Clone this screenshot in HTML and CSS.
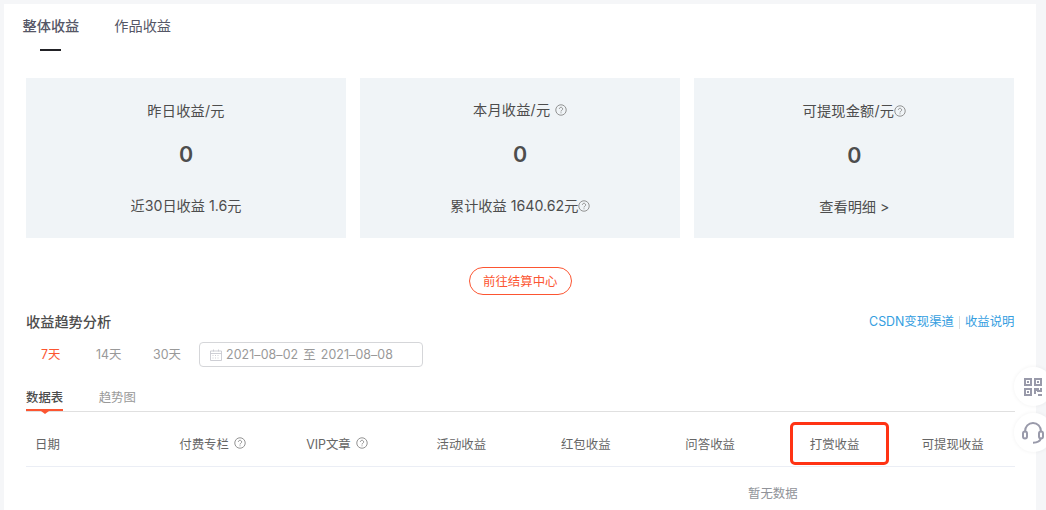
FILE: index.html
```
<!DOCTYPE html>
<html lang="zh-CN">

<head>
    <meta charset="UTF-8">
    <meta name="viewport" content="width=device-width, initial-scale=1.0">
    <title>收益</title>
    <link rel="stylesheet" href="styles.css">
</head>

<body>
    <svg class="symbols">
        <symbol id="help" viewBox="0 0 14 14">
            <circle cx="7" cy="7" r="6.1" />
            <path d="M5.1 5.7a1.9 1.9 0 1 1 2.9 1.6c-.7.4-1 .7-1 1.4M7 9.8v1" />
        </symbol>
    </svg>
    <main class="page">
        <nav class="tabs">
            <a class="tab active">整体收益</a>
            <a class="tab">作品收益</a>
        </nav>
        <section class="cards">
            <div class="card first">
                <p class="card-title">昨日收益/元</p>
                <p class="num">0</p>
                <p class="card-foot">近30日收益 1.6元</p>
            </div>
            <div class="card">
                <p class="card-title">本月收益/元<svg class="help space"><use href="#help" /></svg></p>
                <p class="num">0</p>
                <p class="card-foot">累计收益 1640.62元<svg class="help"><use href="#help" /></svg></p>
            </div>
            <div class="card last">
                <p class="card-title">可提现金额/元<svg class="help"><use href="#help" /></svg></p>
                <p class="num">0</p>
                <p class="card-foot">查看明细 &gt;</p>
            </div>
        </section>
        <div class="settle">
            <a class="settle-btn">前往结算中心</a>
        </div>
        <div class="trend-head">
            <h3>收益趋势分析</h3>
            <div class="links"><a>CSDN变现渠道</a><i></i><a>收益说明</a></div>
        </div>
        <div class="filter">
            <span class="day on">7天</span>
            <span class="day">14天</span>
            <span class="day">30天</span>
            <div class="date">
                <svg class="calendar" viewBox="0 0 12 12">
                    <path d="M.5 2h11v9.5H.5zM.5 4.5h11M3.5.5v2M8.5.5v2" />
                    <path class="dots" d="M2.5 6.5h7M2.5 9h7" />
                </svg>
                <span>2021–08–02</span><span class="to">至</span><span>2021–08–08</span>
            </div>
        </div>
        <div class="views">
            <a class="view on">数据表</a>
            <a class="view">趋势图</a>
        </div>
        <div class="table-head">
            <div class="date-col">日期</div>
            <div>付费专栏<svg class="help"><use href="#help" /></svg></div>
            <div>VIP文章<svg class="help"><use href="#help" /></svg></div>
            <div>活动收益</div>
            <div>红包收益</div>
            <div>问答收益</div>
            <div class="marked">打赏收益</div>
            <div class="last-col">可提现收益</div>
        </div>
        <div class="empty">暂无数据</div>
    </main>
    <aside class="float-bar">
        <a class="round">
            <svg width="18" height="18" viewBox="0 0 18 18">
                <path class="line" d="M1 1h6v6H1zM11 1h6v6h-6zM1 11h6v6H1z" />
                <path class="fill" d="M3 3h2v2H3zM13 3h2v2h-2zM3 13h2v2H3zM10 10h5v2h1v-2h2v4h-5v-1h-1v3h-2zM14 16h4v2h-4z" />
            </svg>
        </a>
        <a class="round">
            <svg width="22" height="22" viewBox="0 0 22 22">
                <path class="line" d="M3 9.5C3 4.5 6.5 1 11 1s8 3.5 8 8.5M19 16c-.8 3.2-3.8 4.700-8 4.700" />
                <rect class="line" x="1" y="9.5" width="4" height="7" rx="2" />
                <rect class="line" x="17" y="9.5" width="4" height="7" rx="2" />
            </svg>
        </a>
    </aside>
</body>

</html>
```
FILE: styles.css
```
* {
    margin: 0;
    padding: 0;
    box-sizing: border-box;
}

body {
    height: 510px;
    padding: 4px 10px 0 4px;
    overflow: hidden;
    background-color: #f5f6f8;
    color: #4d4d4d;
    font: 14.2px/20px Inter, "Noto Sans CJK SC", sans-serif;
}

.symbols {
    display: none;
}

.page {
    height: 506px;
    padding: 0 21.5px 0 22px;
    background-color: #fff;
}

.tabs {
    display: flex;
    gap: 35px;
    height: 74px;
    margin-left: -3.5px;
    padding-top: 12px;
    color: #555666;
}

.tab {
    height: 34px;
}

.tab.active {
    font-weight: 500;
}

.tab.active::after {
    content: "";
    display: block;
    width: 21px;
    height: 2px;
    margin: 13px auto 0;
    background-color: #222226;
}

.cards {
    display: flex;
    gap: 14.2px;
}

.card {
    width: 320px;
    height: 160px;
    padding-top: 22px;
    background-color: #f0f4f7;
    text-align: center;
}

.card.first .card-title {
    padding-top: 1px;
}

.card.last {
    padding-top: 23px;
}

.card-title,
.card-foot {
    display: flex;
    justify-content: center;
    align-items: center;
    height: 20px;
    white-space: pre;
}

.card-title {
    letter-spacing: 0.2px;
}

.num {
    margin-top: 19px;
    font-size: 21.5px;
    font-weight: 600;
    line-height: 30px;
}

.card-foot {
    margin-top: 27px;
}

.help {
    width: 12px;
    height: 12px;
    fill: none;
    stroke: #8c8c8c;
    stroke-width: 1.1;
}

.help.space {
    margin-left: 5px;
}

.settle {
    display: flex;
    justify-content: center;
    margin-top: 29px;
}

.settle-btn {
    width: 103px;
    height: 28px;
    border: 1px solid #fc5531;
    border-radius: 14px;
    color: #fc5531;
    font-size: 12.4px;
    line-height: 27px;
    text-align: center;
}

.trend-head {
    display: flex;
    justify-content: space-between;
    align-items: center;
    height: 20px;
    margin-top: 17px;
}

.trend-head h3 {
    height: 21px;
    font-size: 14.2px;
    font-weight: 500;
    line-height: 19px;
}

.links {
    display: flex;
    align-items: center;
    color: #349edf;
    font-size: 12.4px;
}

.links i {
    width: 1px;
    height: 13px;
    margin: 0 5px;
    background-color: #ddd;
}

.filter {
    display: flex;
    align-items: center;
    height: 25px;
    margin-top: 10px;
    padding-left: 15px;
    color: #999;
    font-size: 12.4px;
}

.day {
    width: 57px;
}

.day.on {
    width: 55px;
    color: #fc5531;
}

.day:nth-child(3) {
    width: 46px;
}

.date {
    display: flex;
    align-items: center;
    width: 224px;
    height: 25px;
    padding-left: 10px;
    border: 1px solid #d5d6d9;
    border-radius: 4px;
    letter-spacing: 0.1px;
}

.to {
    margin: 0 5px;
}

.calendar {
    width: 12px;
    height: 12px;
    margin-right: 4px;
    fill: none;
    stroke: #c8cad0;
    stroke-width: 0.9;
}

.dots {
    stroke-dasharray: 1 1.5;
}

.views {
    display: flex;
    gap: 35.5px;
    height: 24px;
    margin-top: 21px;
    border-bottom: 1px solid #e0e0e0;
    color: #999;
    font-size: 12.4px;
}

.view.on {
    position: relative;
    height: 23px;
    border-bottom: 2px solid #fc5531;
    color: #4d4d4d;
    font-weight: 500;
}

.view.on::after {
    content: "";
    position: absolute;
    left: 50%;
    bottom: -5px;
    margin-left: -4px;
    border: 4px solid transparent;
    border-top: 3px solid #fc5531;
    border-bottom: 0;
}

.table-head {
    display: grid;
    grid-template-columns: repeat(7, 124.4px) 1fr;
    height: 55px;
    border-bottom: 1px solid #ebeef5;
    color: #666;
    font-size: 12.4px;
}

.table-head div {
    display: flex;
    justify-content: center;
    align-items: center;
    padding-top: 11px;
}

.table-head .date-col {
    justify-content: flex-start;
    padding-left: 9px;
}

.table-head .last-col {
    padding-right: 6px;
}

.table-head .help {
    margin: -3px 0 0 5px;
}

.marked {
    position: relative;
}

/* red frame round the column title */
.marked::after {
    content: "";
    position: absolute;
    left: 18px;
    top: 10px;
    box-sizing: border-box;
    width: 99px;
    height: 43px;
    border: 3px solid #ff3314;
    border-radius: 5px;
}

.empty {
    padding: 17px 0 0 722px;
    color: #909399;
    font-size: 12.4px;
}

.float-bar {
    position: fixed;
    left: 1013.5px;
    top: 367px;
}

.round {
    display: flex;
    justify-content: center;
    align-items: center;
    width: 39px;
    height: 39px;
    margin-bottom: 7px;
    border-radius: 50%;
    background-color: #fff;
    box-shadow: 0 0 4px rgba(0, 0, 0, 0.06);
}

.line {
    fill: none;
    stroke: #999aaa;
    stroke-width: 2;
}

.fill {
    fill: #999aaa;
}
```
